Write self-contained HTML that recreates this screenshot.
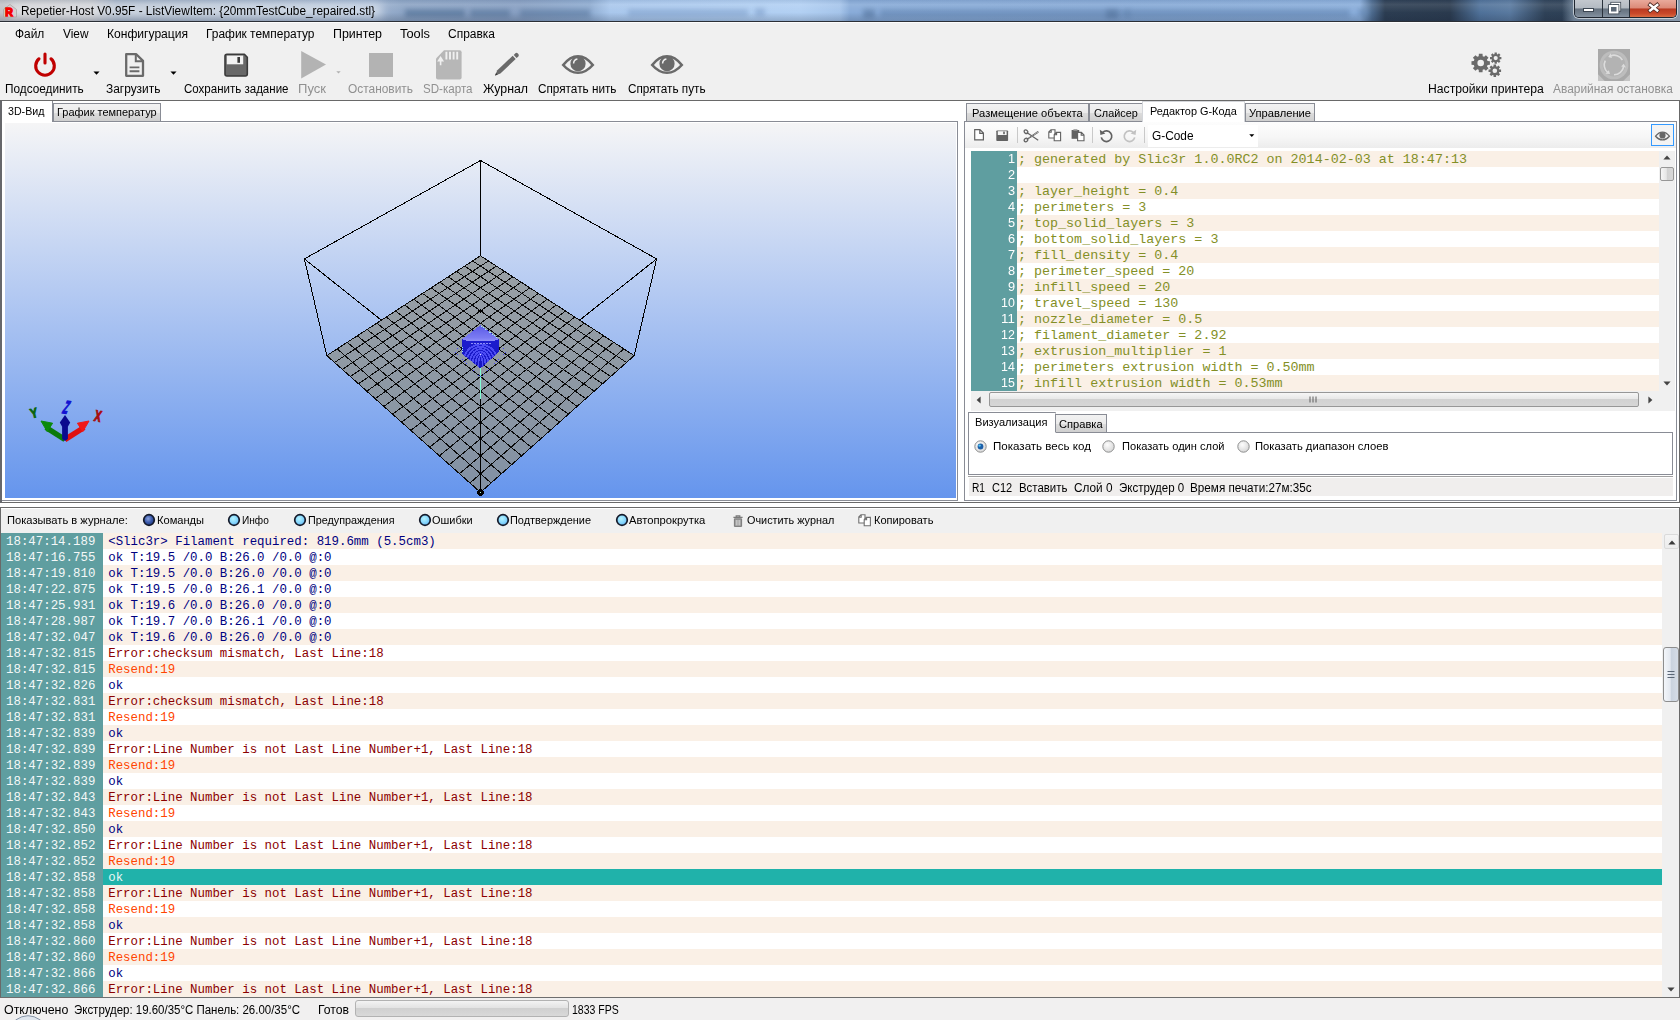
<!DOCTYPE html>
<html lang="ru"><head><meta charset="utf-8">
<title>Repetier-Host V0.95F</title>
<style>
html,body{margin:0;padding:0;}
body{width:1680px;height:1020px;overflow:hidden;background:#f0f0f0;}
#app{position:relative;width:1680px;height:1020px;overflow:hidden;background:#f0f0f0;font-family:"Liberation Sans",sans-serif;}
.a{position:absolute;}
.t{position:absolute;white-space:pre;line-height:1;transform-origin:0 0;display:inline-block;}
.s{font-family:"Liberation Sans",sans-serif;}
.m{font-family:"Liberation Mono",monospace;}
svg{position:absolute;overflow:visible;}
.tab{position:absolute;box-sizing:border-box;border:1px solid #898c95;border-bottom:none;background:linear-gradient(#f2f2f2,#ebebeb 50%,#dddddd 50%,#cfcfcf);}
.tabon{position:absolute;box-sizing:border-box;border:1px solid #898c95;border-bottom:none;background:#fff;}
.row{position:absolute;height:16px;}
.lin{background:#faf0e6;}

</style></head>
<body>
<div id="app">
<!-- title bar -->
<div class="a" id="titlebar" style="left:0;top:0;width:1680px;height:21px;overflow:hidden;background:linear-gradient(90deg,#c2c3c7 0px,#bec1c8 92px,#a0afc4 116px,#a3b5cd 300px,#9fb4d1 372px,#8da5c5 402px,#879fc2 520px,#8eabd0 590px,#a9c7ec 610px,#b2d0f3 800px,#a5c4ea 840px,#88abd8 850px,#86a9d6 1100px,#8aaedb 1360px,#4c6a8e 1372px,#2c3d52 1385px,#2a3a4e 1450px,#4f7199 1480px,#59799f 1510px,#2f4258 1545px,#2a3a4e 1680px);">
<div class="a" style="left:405px;top:9px;width:60px;height:8px;background:#4c6b92;opacity:0.60;filter:blur(2.5px);"></div>
<div class="a" style="left:470px;top:9px;width:40px;height:8px;background:#4c6b92;opacity:0.52;filter:blur(2.5px);"></div>
<div class="a" style="left:520px;top:9px;width:70px;height:8px;background:#4c6b92;opacity:0.45;filter:blur(2.5px);"></div>
<div class="a" style="left:628px;top:9px;width:120px;height:7px;background:#7f9fca;opacity:0.60;filter:blur(2.5px);"></div>
<div class="a" style="left:755px;top:8px;width:10px;height:8px;background:#7f9fca;opacity:0.60;filter:blur(2.5px);"></div>
<div class="a" style="left:863px;top:9px;width:12px;height:9px;background:#55759e;opacity:0.60;filter:blur(2.5px);"></div>
<div class="a" style="left:880px;top:9px;width:250px;height:8px;background:#5f80ab;opacity:0.52;filter:blur(2.5px);"></div>
<div class="a" style="left:1106px;top:9px;width:12px;height:9px;background:#55759e;opacity:0.60;filter:blur(2.5px);"></div>
<div class="a" style="left:1125px;top:9px;width:225px;height:8px;background:#5f80ab;opacity:0.52;filter:blur(2.5px);"></div>
<div class="a" style="left:1358px;top:8px;width:8px;height:8px;background:#5f80ab;opacity:0.52;filter:blur(2.5px);"></div>
<div class="a" style="left:0;top:0;width:1680px;height:21px;background:linear-gradient(rgba(60,80,110,.10),rgba(255,255,255,.10) 22%,rgba(255,255,255,0) 60%,rgba(20,30,50,.20) 100%);"></div>
<div class="a" style="left:10px;top:4px;width:372px;height:13px;background:rgba(255,255,255,.5);filter:blur(5px);"></div>
<svg style="left:2px;top:3px" width="16" height="16" viewBox="0 0 16 16"><path d="M1.5 6.5 L8 1.5 L14.5 6.5 V14 H1.5Z" fill="#d4d0ce" stroke="#aaa4a2" stroke-width=".8"/><text x="3.2" y="13.2" font-family="Liberation Sans, sans-serif" font-weight="bold" font-size="10.5" fill="#f40000" stroke="#f40000" stroke-width="1.3">R</text></svg>
<span id="t1" class="t s" style="left:21.30px;top:4.64px;font-size:12.00px;color:#000;transform:scaleX(0.9853);">Repetier-Host V0.95F - ListViewItem: {20mmTestCube_repaired.stl}</span>
<div class="a" style="left:1562px;top:0;width:118px;height:21px;background:linear-gradient(90deg,rgba(160,180,200,0),rgba(160,180,200,.55) 12px,rgba(170,186,204,.75) 100%);"></div>
<div class="a" style="left:1574px;top:0;width:103px;height:18px;border:1px solid #1f2630;border-top:none;border-radius:0 0 5px 5px;box-sizing:border-box;overflow:hidden;box-shadow:0 0 0 1px rgba(255,255,255,.55);"><div class="a" style="left:0;top:0;width:27px;height:18px;background:linear-gradient(#c3c8ce,#b3bac2 44%,#66727f 50%,#74818f 75%,#8a97a6);border-right:1px solid #2a323c;"></div><div class="a" style="left:28px;top:0;width:26px;height:18px;background:linear-gradient(#c3c8ce,#b3bac2 44%,#66727f 50%,#74818f 75%,#8a97a6);border-right:1px solid #2a323c;"></div><div class="a" style="left:55px;top:0;width:48px;height:18px;background:linear-gradient(#e9aa9c,#dc8a78 44%,#b93a22 50%,#c9482a 75%,#de7448);"></div></div>
<svg style="left:1574px;top:0" width="103" height="18" viewBox="0 0 103 18"><rect x="9.5" y="8.5" width="10" height="3" fill="#fff" stroke="#3c4652" stroke-width="1"/><rect x="38" y="3.5" width="7.5" height="6.5" fill="none" stroke="#3c4652" stroke-width="3.2"/><rect x="38" y="3.5" width="7.5" height="6.5" fill="none" stroke="#fff" stroke-width="1.6"/><rect x="36" y="6" width="7.5" height="6.5" fill="#5d6977" stroke="#3c4652" stroke-width="3.6"/><rect x="36" y="6" width="7.5" height="6.5" fill="#5d6977" stroke="#fff" stroke-width="2"/><path d="M76.2 4.9 L83.2 10.5 M83.2 4.9 L76.2 10.5" stroke="#4a2620" stroke-width="4" stroke-linecap="square"/><path d="M76.2 4.9 L83.2 10.5 M83.2 4.9 L76.2 10.5" stroke="#fff" stroke-width="2.5" stroke-linecap="square"/></svg>
</div>
<div class="a" style="left:0;top:21px;width:1680px;height:1px;background:#2b2f36;"></div>
<div class="a" style="left:0;top:22px;width:1680px;height:1px;background:#fdfdfd;"></div>
<!-- menu bar -->
<span id="t2" class="t s" style="left:14.80px;top:28.34px;font-size:12.00px;color:#000;transform:scaleX(0.9927);">Файл</span>
<span id="t3" class="t s" style="left:62.80px;top:28.34px;font-size:12.00px;color:#000;transform:scaleX(0.9885);">View</span>
<span id="t4" class="t s" style="left:106.90px;top:28.34px;font-size:12.00px;color:#000;transform:scaleX(1.0058);">Конфигурация</span>
<span id="t5" class="t s" style="left:206.30px;top:28.34px;font-size:12.00px;color:#000;transform:scaleX(0.9950);">График температур</span>
<span id="t6" class="t s" style="left:333.30px;top:28.34px;font-size:12.00px;color:#000;transform:scaleX(1.0350);">Принтер</span>
<span id="t7" class="t s" style="left:400.30px;top:28.34px;font-size:12.00px;color:#000;transform:scaleX(1.0708);">Tools</span>
<span id="t8" class="t s" style="left:448.30px;top:28.34px;font-size:12.00px;color:#000;transform:scaleX(0.9983);">Справка</span>
<!-- toolbar -->
<span id="t9" class="t s" style="left:5.20px;top:83.34px;font-size:12.00px;color:#000;transform:scaleX(0.9832);">Подсоединить</span>
<span id="t10" class="t s" style="left:106.40px;top:83.34px;font-size:12.00px;color:#000;transform:scaleX(0.9928);">Загрузить</span>
<span id="t11" class="t s" style="left:183.80px;top:83.34px;font-size:12.00px;color:#000;transform:scaleX(0.9602);">Сохранить задание</span>
<span id="t12" class="t s" style="left:298.30px;top:83.34px;font-size:12.00px;color:#909090;transform:scaleX(1.0874);">Пуск</span>
<span id="t13" class="t s" style="left:348.30px;top:83.34px;font-size:12.00px;color:#909090;transform:scaleX(0.9924);">Остановить</span>
<span id="t14" class="t s" style="left:423.30px;top:83.34px;font-size:12.00px;color:#909090;transform:scaleX(0.9647);">SD-карта</span>
<span id="t15" class="t s" style="left:482.80px;top:83.34px;font-size:12.00px;color:#000;transform:scaleX(1.0275);">Журнал</span>
<span id="t16" class="t s" style="left:538.30px;top:83.34px;font-size:12.00px;color:#000;transform:scaleX(0.9795);">Спрятать нить</span>
<span id="t17" class="t s" style="left:627.80px;top:83.34px;font-size:12.00px;color:#000;transform:scaleX(0.9771);">Спрятать путь</span>
<span id="t18" class="t s" style="left:1427.50px;top:83.34px;font-size:12.00px;color:#000;transform:scaleX(1.0144);">Настройки принтера</span>
<span id="t19" class="t s" style="left:1553.30px;top:83.34px;font-size:12.00px;color:#909090;transform:scaleX(0.9933);">Аварийная остановка</span>
<svg style="left:30px;top:50px" width="30" height="30" viewBox="0 0 30 30"><path d="M9 8.8 A9.3 9.3 0 1 0 21 8.8" fill="none" stroke="#c00000" stroke-width="3.1" stroke-linecap="round"/><path d="M15 4 V13" stroke="#c00000" stroke-width="3.1" stroke-linecap="round"/></svg>
<svg style="left:93.0px;top:70.5px" width="7" height="4.4" viewBox="0 0 8 5"><path d="M.5 .5 H7.5 L4 4.2Z" fill="#000"/></svg>
<svg style="left:170.0px;top:70.5px" width="7" height="4.4" viewBox="0 0 8 5"><path d="M.5 .5 H7.5 L4 4.2Z" fill="#000"/></svg>
<svg style="left:336.1px;top:70.6px" width="5" height="3.1" viewBox="0 0 8 5"><path d="M.5 .5 H7.5 L4 4.2Z" fill="#b0b0b0"/></svg>
<svg style="left:124px;top:53px" width="22" height="24" viewBox="0 0 22 24"><path d="M2.2 1.2 H12.3 L19 7.9 V22.8 H2.2Z" fill="none" stroke="#6a6a6a" stroke-width="2.3" stroke-linejoin="round"/><path d="M11.8 1.5 V8.3 H18.8" fill="none" stroke="#6a6a6a" stroke-width="2"/><path d="M5.6 14.4 H15.4 M5.6 18.2 H15.4" stroke="#6a6a6a" stroke-width="1.9"/></svg>
<svg style="left:224px;top:53px" width="25" height="24" viewBox="0 0 25 24"><path d="M3 1.3 H20.4 L23.3 4.2 V21 Q23.3 23 21.3 23 H3 Q1 23 1 21 V3.3 Q1 1.3 3 1.3Z" fill="#686868" stroke="#3a3a3a" stroke-width="1.6" stroke-linejoin="round"/><rect x="2.8" y="2.6" width="16.4" height="8.7" fill="#f2f2f2"/><rect x="13.4" y="4" width="2.6" height="5.8" fill="#3a3a3a"/></svg>
<svg style="left:300px;top:50px" width="28" height="30" viewBox="0 0 28 30"><path d="M1.2 1 L26 14.6 L1.2 28.6Z" fill="#b3b3b3"/></svg>
<div class="a" style="left:369px;top:53px;width:24px;height:24px;background:#b3b3b3;"></div>
<svg style="left:435px;top:50px" width="28" height="30" viewBox="0 0 28 30"><path d="M9 .3 H24.6 Q26.6 .3 26.6 2.3 V27.4 Q26.6 29.4 24.6 29.4 H3 Q1 29.4 1 27.4 V8.5Z" fill="#b7b7b7"/><path d="M11.4 1.8 V9.6 M15 1.8 V9.6 M18.6 1.8 V9.6 M22.2 1.8 V9.6" stroke="#f0f0f0" stroke-width="1.9"/><path d="M5.6 15.2 V10 M3.6 10.6 L5.6 7.4 L7.6 10.6Z" stroke="#f0f0f0" stroke-width="1.6" fill="#f0f0f0"/></svg>
<svg style="left:493px;top:51px" width="27" height="26" viewBox="0 0 27 26"><path d="M2 24.6 L4.3 19.2 L19.7 4.8 L22.7 8 L7.4 22.5Z" fill="#6a6a6a"/><path d="M20.7 3.9 L22.4 2.3 Q23.6 1.2 24.8 2.4 L25.4 3.1 Q26.4 4.3 25.3 5.4 L23.6 7Z" fill="#6a6a6a"/><path d="M2 24.6 L3.1 22 L4.8 23.7Z" fill="#3c3c3c"/></svg>
<svg style="left:562.2px;top:55.3px" width="32.0" height="19.0" viewBox="0 0 32 19"><path d="M1.2 10 Q8 1.2 16 1.2 Q24 1.2 30.8 10 Q24 17.8 16 17.8 Q8 17.8 1.2 10Z" fill="none" stroke="#6a6a6a" stroke-width="2.6"/><circle cx="16" cy="8.7" r="7.6" fill="#6a6a6a"/><path d="M11.6 8.4 A4.6 4.6 0 0 1 15.4 4" stroke="#f0f0f0" stroke-width="1.5" fill="none"/></svg>
<svg style="left:650.8px;top:55.3px" width="32.0" height="19.0" viewBox="0 0 32 19"><path d="M1.2 10 Q8 1.2 16 1.2 Q24 1.2 30.8 10 Q24 17.8 16 17.8 Q8 17.8 1.2 10Z" fill="none" stroke="#6a6a6a" stroke-width="2.6"/><circle cx="16" cy="8.7" r="7.6" fill="#6a6a6a"/><path d="M11.6 8.4 A4.6 4.6 0 0 1 15.4 4" stroke="#f0f0f0" stroke-width="1.5" fill="none"/></svg>
<svg style="left:1470px;top:51px" width="34" height="28" viewBox="0 0 34 28"><path fill-rule="evenodd" fill="#6a6a6a" d="M19.92 10.17 L19.92 13.83 L17.56 13.99 L16.96 15.44 L18.52 17.22 L15.92 19.82 L14.14 18.26 L12.69 18.86 L12.53 21.22 L8.87 21.22 L8.71 18.86 L7.26 18.26 L5.48 19.82 L2.88 17.22 L4.44 15.44 L3.84 13.99 L1.48 13.83 L1.48 10.17 L3.84 10.01 L4.44 8.56 L2.88 6.78 L5.48 4.18 L7.26 5.74 L8.71 5.14 L8.87 2.78 L12.53 2.78 L12.69 5.14 L14.14 5.74 L15.92 4.18 L18.52 6.78 L16.96 8.56 L17.56 10.01Z M7.41 12.00 a3.29 3.29 0 1 0 6.58 0 a3.29 3.29 0 1 0 -6.58 0Z M31.39 5.97 L31.39 8.23 L29.77 8.28 L29.41 9.14 L30.52 10.32 L28.92 11.92 L27.74 10.81 L26.88 11.17 L26.83 12.79 L24.57 12.79 L24.52 11.17 L23.66 10.81 L22.48 11.92 L20.88 10.32 L21.99 9.14 L21.63 8.28 L20.01 8.23 L20.01 5.97 L21.63 5.92 L21.99 5.06 L20.88 3.88 L22.48 2.28 L23.66 3.39 L24.52 3.03 L24.57 1.41 L26.83 1.41 L26.88 3.03 L27.74 3.39 L28.92 2.28 L30.52 3.88 L29.41 5.06 L29.77 5.92Z M23.61 7.10 a2.09 2.09 0 1 0 4.18 0 a2.09 2.09 0 1 0 -4.18 0Z M31.08 18.55 L31.08 21.05 L29.29 21.10 L28.89 22.05 L30.12 23.36 L28.36 25.12 L27.05 23.89 L26.10 24.29 L26.05 26.08 L23.55 26.08 L23.50 24.29 L22.55 23.89 L21.24 25.12 L19.48 23.36 L20.71 22.05 L20.31 21.10 L18.52 21.05 L18.52 18.55 L20.31 18.50 L20.71 17.55 L19.48 16.24 L21.24 14.48 L22.55 15.71 L23.50 15.31 L23.55 13.52 L26.05 13.52 L26.10 15.31 L27.05 15.71 L28.36 14.48 L30.12 16.24 L28.89 17.55 L29.29 18.50Z M22.50 19.80 a2.30 2.30 0 1 0 4.61 0 a2.30 2.30 0 1 0 -4.61 0Z"/></svg>
<svg style="left:1598px;top:48.9px" width="32" height="32" viewBox="0 0 33 33"><rect x="0" y="0" width="33" height="33" fill="#a9a9a9"/><path d="M0 26 L7 33 H0Z M33 26 L26 33 H33Z" fill="#c4c4c4"/><circle cx="16.5" cy="16.5" r="14.8" fill="#bdbdbd"/><circle cx="16.5" cy="16.5" r="11.8" fill="#b3b3b3"/><path d="M25.16 11.30 A10.1 10.1 0 0 0 13.05 7.01" fill="none" stroke="#dcdcdc" stroke-width="1.7"/><path d="M10.56 8.33 L13.03 4.39 L14.41 9.19Z" fill="#dcdcdc"/><path d="M7.50 11.91 A10.1 10.1 0 0 0 10.01 24.24" fill="none" stroke="#dcdcdc" stroke-width="1.7"/><path d="M12.39 25.73 L7.75 25.56 L11.22 21.97Z" fill="#dcdcdc"/><path d="M16.50 26.60 A10.1 10.1 0 0 0 26.50 17.91" fill="none" stroke="#dcdcdc" stroke-width="1.7"/><path d="M26.50 15.09 L28.82 19.12 L23.93 18.08Z" fill="#dcdcdc"/></svg>
<!-- upper split panel -->
<div class="a" style="left:0;top:100px;width:1680px;height:403px;background:#fff;box-sizing:border-box;border-top:1px solid #696969;border-bottom:1px solid #696969;border-left:2px solid #66676b;border-right:1px solid #696969;"></div>
<div class="a" style="left:0;top:503px;width:1680px;height:4px;background:#fff;"></div>
<!-- left tab control (3D view) -->
<div class="a" style="left:2px;top:121px;width:956px;height:380px;box-sizing:border-box;border:1px solid #898c95;border-left:none;background:#fff;"></div>
<div class="tabon" style="left:2px;top:101px;width:51px;height:21px;border-left:none;border-top:none;"></div>
<div class="tab" style="left:53px;top:103px;width:108px;height:18px;"></div>
<span id="t20" class="t s" style="left:8.40px;top:105.89px;font-size:11.00px;color:#000;transform:scaleX(0.9674);">3D-Вид</span>
<span id="t21" class="t s" style="left:56.60px;top:107.09px;font-size:11.00px;color:#000;transform:scaleX(0.9973);">График температур</span>
<svg id="view3d" style="left:5px;top:123px" width="951" height="375" viewBox="5 123 951 375" shape-rendering="crispEdges">
<defs><linearGradient id="bg3d" x1="0" y1="0" x2="0" y2="1"><stop offset="0" stop-color="#f5f5f6"/><stop offset="1" stop-color="#6595ed"/></linearGradient><linearGradient id="cubeside" x1="0" y1="0" x2="0" y2="1"><stop offset="0" stop-color="#2020d4"/><stop offset="1" stop-color="#1616c2"/></linearGradient><linearGradient id="cubetop" x1="0" y1="0" x2="0" y2="1"><stop offset="0" stop-color="#5a5ae6"/><stop offset=".8" stop-color="#7a7af2"/><stop offset="1" stop-color="#8c8cf8"/></linearGradient></defs>
<rect x="5" y="123" width="951" height="375" fill="url(#bg3d)"/>
<g>
<path d="M480.5 160.5 L304.4 258.9" stroke="#000" stroke-width="1" fill="none"/>
<path d="M480.5 160.5 L656.6 258.9" stroke="#000" stroke-width="1" fill="none"/>
<path d="M304.4 258.9 L381.4 320.2" stroke="#000" stroke-width="1" fill="none"/>
<path d="M656.6 258.9 L579.6 320.2" stroke="#000" stroke-width="1" fill="none"/>
<path d="M480.5 160.5 L480.5 255.8" stroke="#000" stroke-width="1" fill="none"/>
<path d="M304.4 258.9 L326.8 355.6" stroke="#000" stroke-width="1" fill="none"/>
<path d="M656.6 258.9 L634.2 355.6" stroke="#000" stroke-width="1" fill="none"/>
</g>
<path d="M480.5 255.8 L634.2 355.6 L480.5 492.4 L326.8 355.6Z" fill="rgba(140,143,138,0.74)"/>
<path d="M480.5 255.8 L326.8 355.6 M480.5 255.8 L634.2 355.6 M488.4 260.9 L334.5 362.5 M472.6 260.9 L626.5 362.5 M496.4 266.1 L342.3 369.4 M464.6 266.1 L618.7 369.4 M504.5 271.4 L350.3 376.5 M456.5 271.4 L610.7 376.5 M512.8 276.8 L358.5 383.8 M448.2 276.8 L602.5 383.8 M521.2 282.2 L366.8 391.2 M439.8 282.2 L594.2 391.2 M529.8 287.8 L375.2 398.7 M431.2 287.8 L585.8 398.7 M538.5 293.4 L383.9 406.4 M422.5 293.4 L577.1 406.4 M547.3 299.2 L392.7 414.2 M413.7 299.2 L568.3 414.2 M556.3 305.0 L401.6 422.2 M404.7 305.0 L559.4 422.2 M565.4 311.0 L410.8 430.4 M395.6 311.0 L550.2 430.4 M574.8 317.0 L420.1 438.7 M386.2 317.0 L540.9 438.7 M584.2 323.1 L429.7 447.2 M376.8 323.1 L531.3 447.2 M593.9 329.4 L439.4 455.8 M367.1 329.4 L521.6 455.8 M603.7 335.8 L449.4 464.7 M357.3 335.8 L511.6 464.7 M613.7 342.3 L459.5 473.7 M347.3 342.3 L501.5 473.7 M623.8 348.9 L469.9 483.0 M337.2 348.9 L491.1 483.0 M634.2 355.6 L480.5 492.4 M326.8 355.6 L480.5 492.4" stroke="#0a0a0a" stroke-width="1" fill="none"/>
<path d="M478 311 H483 M480.5 309 V313" stroke="#000" stroke-width="1.6"/>
<path d="M480.5 399 V492" stroke="#000" stroke-width="1.3"/>
<path d="M480.5 368 V399" stroke="#7fffd4" stroke-width="1.3"/>
<path d="M480.5 330 L507 351 L480.5 377 L454 351Z" stroke="#4040ff" stroke-width=".9" stroke-dasharray="1 2.2" fill="none"/>
<clipPath id="cubeclip"><path d="M462.3 340 H498.8 V352 L480.5 368.4 L462.3 354Z"/></clipPath>
<path d="M462.3 339 L480.5 325.2 L498.8 339 L498.8 352 L480.5 368.4 L462.3 354Z" fill="url(#cubeside)"/>
<path d="M462.3 339.2 L480.5 325.2 L498.8 339.2 L494.6 340.6 H466.4Z" fill="url(#cubetop)"/>
<path d="M478.1 374 C478.1 362.0 479.2 356.6 480.5 356.0 C481.8 356.6 482.9 362.0 482.9 374 M474.9 374 C474.9 359.7 477.4 354.3 480.5 353.7 C483.6 354.3 486.1 359.7 486.1 374 M471.7 374 C471.7 357.4 475.7 352.0 480.5 351.4 C485.3 352.0 489.3 357.4 489.3 374 M468.5 374 C468.5 355.1 473.9 349.7 480.5 349.1 C487.1 349.7 492.5 355.1 492.5 374 M465.3 374 C465.3 352.8 472.1 347.4 480.5 346.8 C488.9 347.4 495.7 352.8 495.7 374 M462.1 374 C462.1 350.5 470.4 345.1 480.5 344.5 C490.6 345.1 498.9 350.5 498.9 374" stroke="#4c4cf4" stroke-width="1.7" fill="none" clip-path="url(#cubeclip)"/>
<path d="M470.6 343.2 H491" stroke="#8e8ef6" stroke-width="1.3" stroke-dasharray="2 1"/>
<rect x="480" y="354" width="1" height="1" fill="#d8d8ff"/>
<path d="M481 325.8 L498 338.6" stroke="#9ceaff" stroke-width="1" stroke-dasharray="1 1.7" fill="none"/>
<path d="M462.5 346.6 V354" stroke="#9ceaff" stroke-width="1" stroke-dasharray="1 1.4" fill="none"/>
<circle cx="480.5" cy="492.4" r="3.4" fill="#000"/><rect x="480" y="492" width="1" height="1" fill="#b8ffd0"/>
<g shape-rendering="auto">
<path d="M64.9 439.6 L46 427.5" stroke="#0a7a0a" stroke-width="5.4"/><path d="M41 421 L52.6 423.2 L47.2 431.6Z" fill="#0b8a0b" stroke="#0b8a0b" stroke-width="1"/>
<path d="M64.9 439.6 L84 427.5" stroke="#e01010" stroke-width="5.4"/><path d="M89 421 L77.4 423.2 L82.8 431.6Z" fill="#f01818" stroke="#f01818" stroke-width="1"/>
<path d="M62.1 425 H67.9 V439 L65 441 L62.1 439Z" fill="#0a0a8e"/><path d="M65 415 L70.2 422.6 L68 426.4 H62 L59.8 422.6Z" fill="#0a0a8e"/>
<text x="0" y="0" transform="translate(31.6 418.6) rotate(-14) scale(.85 1.05)" font-family="Liberation Sans, sans-serif" font-weight="bold" font-size="13" fill="#0a640a" stroke="#0a640a" stroke-width=".9">Y</text>
<text x="0" y="0" transform="translate(61.4 413) rotate(8) skewX(-14) scale(.6 1.32)" font-family="Liberation Sans, sans-serif" font-weight="bold" font-size="14" fill="#1212d2" stroke="#1212d2" stroke-width="1">Z</text>
<text x="0" y="0" transform="translate(93.6 420.6) rotate(13) scale(.72 1.12)" font-family="Liberation Sans, sans-serif" font-weight="bold" font-size="14" fill="#a80c0c" stroke="#a80c0c" stroke-width=".9">X</text>
</g>
</svg>
<!-- right tab control (G-code editor) -->
<div class="a" style="left:964px;top:121px;width:713px;height:380px;box-sizing:border-box;border:1px solid #898c95;background:#fff;"></div>
<div class="tab" style="left:966px;top:103px;width:123px;height:18px;"></div>
<div class="tab" style="left:1089px;top:103px;width:54px;height:18px;"></div>
<div class="tabon" style="left:1142px;top:101px;width:103px;height:21px;border-color:#d4d6da;"></div>
<div class="tab" style="left:1245px;top:103px;width:70px;height:18px;"></div>
<span id="t22" class="t s" style="left:971.70px;top:107.69px;font-size:11.00px;color:#000;transform:scaleX(1.0134);">Размещение объекта</span>
<span id="t23" class="t s" style="left:1093.90px;top:107.69px;font-size:11.00px;color:#000;transform:scaleX(0.9870);">Слайсер</span>
<span id="t24" class="t s" style="left:1149.60px;top:105.89px;font-size:11.00px;color:#000;transform:scaleX(0.9914);">Редактор G-Кода</span>
<span id="t25" class="t s" style="left:1248.60px;top:107.69px;font-size:11.00px;color:#000;transform:scaleX(1.0138);">Управление</span>
<div class="a" style="left:965px;top:122px;width:711px;height:26px;background:linear-gradient(#fdfdfd,#f7f7f7 55%,#ececec);"></div>
<svg style="left:974px;top:129.4px" width="11" height="12" viewBox="0 0 11 12"><path d="M.7 .7 H6 L9.4 4.1 V10.9 H.7Z M5.8 .9 V4.3 H9.2" fill="#fff" stroke="#626262" stroke-width="1.2"/></svg>
<svg style="left:995.6px;top:129.6px" width="13" height="12" viewBox="0 0 13 12"><rect x=".3" y=".4" width="11.8" height="10.6" rx=".8" fill="#626262"/><rect x="1.8" y="1.2" width="8.8" height="3.8" fill="#f6f6f6"/><rect x="7.2" y="1.6" width="1.6" height="2.6" fill="#626262"/></svg>
<div class="a" style="left:1017px;top:127px;width:1px;height:16px;background:#c9c9c9;"></div>
<svg style="left:1023.4px;top:128.6px" width="17" height="14" viewBox="0 0 17 14"><path d="M3.8 3.6 L15.2 11.2" stroke="#626262" stroke-width="1.2" fill="none"/><path d="M3.8 10.2 L14.8 2.4 L15.4 3.4 L6 9.4Z" stroke="#626262" stroke-width=".9" fill="#fff"/><ellipse cx="3" cy="2.7" rx="2" ry="1.6" fill="none" stroke="#626262" stroke-width="1.3" transform="rotate(40 3 2.7)"/><ellipse cx="3" cy="11" rx="2" ry="1.6" fill="none" stroke="#626262" stroke-width="1.3" transform="rotate(-40 3 11)"/></svg>
<svg style="left:1047.6px;top:128.8px" width="14" height="13" viewBox="0 0 14 13"><path d="M.8 3 L3 .7 H7 V9 H.8Z M3.2 .9 V3.2 H1" fill="#fff" stroke="#626262" stroke-width="1.1"/><path d="M6.2 5.6 L8.4 3.4 H12.6 V11.8 H6.2Z M8.6 3.6 V5.8 H6.4" fill="#fff" stroke="#626262" stroke-width="1.1"/></svg>
<svg style="left:1070.6px;top:128.8px" width="15" height="13" viewBox="0 0 15 13"><rect x=".6" y="1" width="7.6" height="8.8" fill="#626262"/><rect x="2.4" y=".2" width="4" height="1.6" fill="#9a9a9a"/><path d="M6.6 3.4 H10.4 L13 6 V11.8 H6.6Z M10.2 3.6 V6.2 H12.8" fill="#fff" stroke="#626262" stroke-width="1.1"/></svg>
<div class="a" style="left:1092px;top:127px;width:1px;height:16px;background:#c9c9c9;"></div>
<svg style="left:1099px;top:127.6px" width="15" height="15" viewBox="0 0 15 15"><path d="M3.6 4.6 A5.3 5.3 0 1 1 2.3 9.4" fill="none" stroke="#626262" stroke-width="1.7"/><path d="M.8 1.8 L1.4 7 L6.4 5.4Z" fill="#626262"/></svg>
<svg style="left:1121.6px;top:127.6px" width="15" height="15" viewBox="0 0 15 15"><path d="M11.4 4.6 A5.3 5.3 0 1 0 12.7 9.4" fill="none" stroke="#c2c2c2" stroke-width="1.7"/><path d="M14.2 1.8 L13.6 7 L8.6 5.4Z" fill="#c2c2c2"/></svg>
<div class="a" style="left:1144px;top:127px;width:1px;height:16px;background:#c9c9c9;"></div>
<div class="a" style="left:1148px;top:125px;width:110px;height:22px;background:#fff;"></div>
<span id="t26" class="t s" style="left:1151.70px;top:129.84px;font-size:12.00px;color:#000;transform:scaleX(0.9897);">G-Code</span>
<svg style="left:1248.6px;top:134px" width="5.6" height="3.5" viewBox="0 0 8 5"><path d="M.4 .4 H7.6 L4 4.4Z" fill="#000"/></svg>
<div class="a" style="left:1651px;top:124px;width:23px;height:22px;box-sizing:border-box;border:1px solid #3399ff;background:#f3f3f3;"></div>
<svg style="left:1655px;top:130.5px" width="15" height="10" viewBox="0 0 32 19"><path d="M1.2 10 Q8 1.2 16 1.2 Q24 1.2 30.8 10 Q24 17.8 16 17.8 Q8 17.8 1.2 10Z" fill="none" stroke="#666" stroke-width="2.6"/><circle cx="16" cy="8.3" r="6.6" fill="#666"/></svg>
<div class="a" style="left:971px;top:151px;width:46px;height:240px;background:#5f9ea0;"></div>
<div class="row lin" style="left:1017px;top:151px;width:642px;"></div>
<span id="t27" class="t s" style="left:1007.80px;top:153.44px;font-size:12.00px;color:#fff;transform:scaleX(1.0617);">1</span>
<span id="t28" class="t m" style="left:1018.00px;top:152.56px;font-size:13.36px;color:#838f26;">; generated by Slic3r 1.0.0RC2 on 2014-02-03 at 18:47:13</span>
<div class="row" style="left:1017px;top:167px;width:642px;"></div>
<span id="t29" class="t s" style="left:1007.80px;top:169.44px;font-size:12.00px;color:#fff;transform:scaleX(1.0617);">2</span>
<div class="row lin" style="left:1017px;top:183px;width:642px;"></div>
<span id="t30" class="t s" style="left:1007.80px;top:185.44px;font-size:12.00px;color:#fff;transform:scaleX(1.0617);">3</span>
<span id="t31" class="t m" style="left:1018.00px;top:184.56px;font-size:13.36px;color:#838f26;">; layer_height = 0.4</span>
<div class="row" style="left:1017px;top:199px;width:642px;"></div>
<span id="t32" class="t s" style="left:1007.80px;top:201.44px;font-size:12.00px;color:#fff;transform:scaleX(1.0617);">4</span>
<span id="t33" class="t m" style="left:1018.00px;top:200.56px;font-size:13.36px;color:#838f26;">; perimeters = 3</span>
<div class="row lin" style="left:1017px;top:215px;width:642px;"></div>
<span id="t34" class="t s" style="left:1007.80px;top:217.44px;font-size:12.00px;color:#fff;transform:scaleX(1.0617);">5</span>
<span id="t35" class="t m" style="left:1018.00px;top:216.56px;font-size:13.36px;color:#838f26;">; top_solid_layers = 3</span>
<div class="row" style="left:1017px;top:231px;width:642px;"></div>
<span id="t36" class="t s" style="left:1007.80px;top:233.44px;font-size:12.00px;color:#fff;transform:scaleX(1.0617);">6</span>
<span id="t37" class="t m" style="left:1018.00px;top:232.56px;font-size:13.36px;color:#838f26;">; bottom_solid_layers = 3</span>
<div class="row lin" style="left:1017px;top:247px;width:642px;"></div>
<span id="t38" class="t s" style="left:1007.80px;top:249.44px;font-size:12.00px;color:#fff;transform:scaleX(1.0617);">7</span>
<span id="t39" class="t m" style="left:1018.00px;top:248.56px;font-size:13.36px;color:#838f26;">; fill_density = 0.4</span>
<div class="row" style="left:1017px;top:263px;width:642px;"></div>
<span id="t40" class="t s" style="left:1007.80px;top:265.44px;font-size:12.00px;color:#fff;transform:scaleX(1.0617);">8</span>
<span id="t41" class="t m" style="left:1018.00px;top:264.56px;font-size:13.36px;color:#838f26;">; perimeter_speed = 20</span>
<div class="row lin" style="left:1017px;top:279px;width:642px;"></div>
<span id="t42" class="t s" style="left:1007.80px;top:281.44px;font-size:12.00px;color:#fff;transform:scaleX(1.0617);">9</span>
<span id="t43" class="t m" style="left:1018.00px;top:280.56px;font-size:13.36px;color:#838f26;">; infill_speed = 20</span>
<div class="row" style="left:1017px;top:295px;width:642px;"></div>
<span id="t44" class="t s" style="left:1001.10px;top:297.44px;font-size:12.00px;color:#fff;transform:scaleX(1.0330);">10</span>
<span id="t45" class="t m" style="left:1018.00px;top:296.56px;font-size:13.36px;color:#838f26;">; travel_speed = 130</span>
<div class="row lin" style="left:1017px;top:311px;width:642px;"></div>
<span id="t46" class="t s" style="left:1001.10px;top:313.44px;font-size:12.00px;color:#fff;transform:scaleX(1.1068);">11</span>
<span id="t47" class="t m" style="left:1018.00px;top:312.56px;font-size:13.36px;color:#838f26;">; nozzle_diameter = 0.5</span>
<div class="row" style="left:1017px;top:327px;width:642px;"></div>
<span id="t48" class="t s" style="left:1001.10px;top:329.44px;font-size:12.00px;color:#fff;transform:scaleX(1.0330);">12</span>
<span id="t49" class="t m" style="left:1018.00px;top:328.56px;font-size:13.36px;color:#838f26;">; filament_diameter = 2.92</span>
<div class="row lin" style="left:1017px;top:343px;width:642px;"></div>
<span id="t50" class="t s" style="left:1001.10px;top:345.44px;font-size:12.00px;color:#fff;transform:scaleX(1.0330);">13</span>
<span id="t51" class="t m" style="left:1018.00px;top:344.56px;font-size:13.36px;color:#838f26;">; extrusion_multiplier = 1</span>
<div class="row" style="left:1017px;top:359px;width:642px;"></div>
<span id="t52" class="t s" style="left:1001.10px;top:361.44px;font-size:12.00px;color:#fff;transform:scaleX(1.0330);">14</span>
<span id="t53" class="t m" style="left:1018.00px;top:360.56px;font-size:13.36px;color:#838f26;">; perimeters extrusion width = 0.50mm</span>
<div class="row lin" style="left:1017px;top:375px;width:642px;"></div>
<span id="t54" class="t s" style="left:1001.10px;top:377.44px;font-size:12.00px;color:#fff;transform:scaleX(1.0330);">15</span>
<span id="t55" class="t m" style="left:1018.00px;top:376.56px;font-size:13.36px;color:#838f26;">; infill extrusion width = 0.53mm</span>
<div class="a" style="left:1659px;top:151px;width:16px;height:240px;background:#f0f0f0;"></div>
<div class="a" style="left:1659.5px;top:166.5px;width:14px;height:14px;box-sizing:border-box;border:1px solid #979797;border-radius:2px;background:linear-gradient(90deg,#f6f6f6,#e6e6e6 45%,#d2d2d2 50%,#d8d8d8);"></div>
<svg style="left:1663px;top:155px" width="8" height="5" viewBox="0 0 8 5"><path d="M.4 4.6 H7.6 L4 .6Z" fill="#444"/></svg>
<svg style="left:1663px;top:380.5px" width="8" height="5" viewBox="0 0 8 5"><path d="M.4 .4 H7.6 L4 4.4Z" fill="#444"/></svg>
<div class="a" style="left:971px;top:391px;width:704px;height:20px;background:#f0f0f0;"></div>
<div class="a" style="left:988.5px;top:392px;width:650px;height:15px;box-sizing:border-box;border:1px solid #979797;border-radius:2px;background:linear-gradient(#f6f6f6,#e8e8e8 45%,#d2d2d2 50%,#d6d6d6);"></div>
<svg style="left:976px;top:395.5px" width="5" height="8" viewBox="0 0 5 8"><path d="M4.6 .4 V7.6 L.6 4Z" fill="#444"/></svg>
<svg style="left:1647.5px;top:395.5px" width="5" height="8" viewBox="0 0 5 8"><path d="M.4 .4 V7.6 L4.4 4Z" fill="#444"/></svg>
<svg style="left:1309px;top:396px" width="8" height="7" viewBox="0 0 8 7"><path d="M1 .5 V6.5 M4 .5 V6.5 M7 .5 V6.5" stroke="#5c5c5c" stroke-width="1"/></svg>
<div class="a" style="left:968px;top:432px;width:705px;height:43px;box-sizing:border-box;border:1px solid #898c95;background:#fff;"></div>
<div class="tabon" style="left:968px;top:412px;width:88px;height:21px;border-right-color:#c4c6ca;"></div>
<div class="tab" style="left:1055px;top:414px;width:52px;height:18px;"></div>
<span id="t56" class="t s" style="left:975.30px;top:417.09px;font-size:11.00px;color:#000;transform:scaleX(1.0065);">Визуализация</span>
<span id="t57" class="t s" style="left:1058.70px;top:418.69px;font-size:11.00px;color:#000;transform:scaleX(1.0103);">Справка</span>
<svg style="left:974.4px;top:439.8px" width="13" height="13" viewBox="0 0 13 13"><defs><radialGradient id="rg980" cx=".4" cy=".35" r=".8"><stop offset="0" stop-color="#fdfdfd"/><stop offset="1" stop-color="#cfcfcf"/></radialGradient></defs><circle cx="6.5" cy="6.5" r="5.7" fill="url(#rg980)" stroke="#8e8f8f" stroke-width="1"/><circle cx="6.5" cy="6.5" r="2.9" fill="#1c5fa8"/><circle cx="5.6" cy="5.6" r="1.2" fill="#55c3f2"/></svg>
<svg style="left:1102.1px;top:439.8px" width="13" height="13" viewBox="0 0 13 13"><defs><radialGradient id="rg1108" cx=".4" cy=".35" r=".8"><stop offset="0" stop-color="#fdfdfd"/><stop offset="1" stop-color="#cfcfcf"/></radialGradient></defs><circle cx="6.5" cy="6.5" r="5.7" fill="url(#rg1108)" stroke="#8e8f8f" stroke-width="1"/></svg>
<svg style="left:1236.5px;top:439.8px" width="13" height="13" viewBox="0 0 13 13"><defs><radialGradient id="rg1243" cx=".4" cy=".35" r=".8"><stop offset="0" stop-color="#fdfdfd"/><stop offset="1" stop-color="#cfcfcf"/></radialGradient></defs><circle cx="6.5" cy="6.5" r="5.7" fill="url(#rg1243)" stroke="#8e8f8f" stroke-width="1"/></svg>
<span id="t58" class="t s" style="left:993.20px;top:440.89px;font-size:11.00px;color:#000;transform:scaleX(1.0506);">Показать весь код</span>
<span id="t59" class="t s" style="left:1121.70px;top:440.89px;font-size:11.00px;color:#000;transform:scaleX(1.0078);">Показать один слой</span>
<span id="t60" class="t s" style="left:1255.10px;top:440.89px;font-size:11.00px;color:#000;transform:scaleX(1.0210);">Показать диапазон слоев</span>
<div class="a" style="left:968px;top:476px;width:705px;height:1px;background:#a0a0a0;"></div>
<div class="a" style="left:969px;top:478px;width:704px;height:18px;background:#f0eeed;"></div>
<span id="t61" class="t s" style="left:971.50px;top:481.64px;font-size:12.00px;color:#000;transform:scaleX(0.8473);">R1</span>
<span id="t62" class="t s" style="left:991.90px;top:481.64px;font-size:12.00px;color:#000;transform:scaleX(0.9175);">C12</span>
<span id="t63" class="t s" style="left:1018.50px;top:481.64px;font-size:12.00px;color:#000;transform:scaleX(0.9514);">Вставить</span>
<span id="t64" class="t s" style="left:1073.50px;top:481.64px;font-size:12.00px;color:#000;transform:scaleX(0.9825);">Слой 0</span>
<span id="t65" class="t s" style="left:1118.70px;top:481.64px;font-size:12.00px;color:#000;transform:scaleX(0.9586);">Экструдер 0</span>
<span id="t66" class="t s" style="left:1190.00px;top:481.64px;font-size:12.00px;color:#000;transform:scaleX(0.9760);">Время печати:27м:35с</span>
<!-- log panel -->
<div class="a" style="left:0;top:507px;width:1680px;height:491px;box-sizing:border-box;background:#f0f0f0;border-top:1px solid #696969;border-left:1px solid #696969;border-right:1px solid #696969;"></div>
<div class="a" style="left:1px;top:508px;width:1678px;height:1px;background:#fff;"></div>
<span id="t67" class="t s" style="left:6.80px;top:515.39px;font-size:11.00px;color:#000;transform:scaleX(1.0142);">Показывать в журнале:</span>
<svg style="left:142.0px;top:513.0px" width="14" height="14" viewBox="0 0 14 14"><defs><radialGradient id="lg149" cx=".42" cy=".38" r=".7"><stop offset="0" stop-color="#8aa2dc"/><stop offset=".5" stop-color="#3c5cae"/><stop offset="1" stop-color="#1a2f74"/></radialGradient></defs><circle cx="7" cy="7" r="5.3" fill="url(#lg149)" stroke="#141a2a" stroke-width="1.7"/></svg>
<span id="t68" class="t s" style="left:156.50px;top:515.39px;font-size:11.00px;color:#000;transform:scaleX(1.0105);">Команды</span>
<svg style="left:227.1px;top:513.0px" width="14" height="14" viewBox="0 0 14 14"><defs><radialGradient id="lg234" cx=".42" cy=".38" r=".7"><stop offset="0" stop-color="#b4f4ff"/><stop offset=".55" stop-color="#86d6fd"/><stop offset="1" stop-color="#5eaef0"/></radialGradient></defs><circle cx="7" cy="7" r="5.3" fill="url(#lg234)" stroke="#141a2a" stroke-width="1.7"/></svg>
<span id="t69" class="t s" style="left:242.30px;top:515.39px;font-size:11.00px;color:#000;transform:scaleX(0.9192);">Инфо</span>
<svg style="left:293.3px;top:513.0px" width="14" height="14" viewBox="0 0 14 14"><defs><radialGradient id="lg300" cx=".42" cy=".38" r=".7"><stop offset="0" stop-color="#b4f4ff"/><stop offset=".55" stop-color="#86d6fd"/><stop offset="1" stop-color="#5eaef0"/></radialGradient></defs><circle cx="7" cy="7" r="5.3" fill="url(#lg300)" stroke="#141a2a" stroke-width="1.7"/></svg>
<span id="t70" class="t s" style="left:308.10px;top:515.39px;font-size:11.00px;color:#000;transform:scaleX(0.9819);">Предупраждения</span>
<svg style="left:418.3px;top:513.0px" width="14" height="14" viewBox="0 0 14 14"><defs><radialGradient id="lg425" cx=".42" cy=".38" r=".7"><stop offset="0" stop-color="#b4f4ff"/><stop offset=".55" stop-color="#86d6fd"/><stop offset="1" stop-color="#5eaef0"/></radialGradient></defs><circle cx="7" cy="7" r="5.3" fill="url(#lg425)" stroke="#141a2a" stroke-width="1.7"/></svg>
<span id="t71" class="t s" style="left:432.00px;top:515.39px;font-size:11.00px;color:#000;transform:scaleX(0.9952);">Ошибки</span>
<svg style="left:496.0px;top:513.0px" width="14" height="14" viewBox="0 0 14 14"><defs><radialGradient id="lg503" cx=".42" cy=".38" r=".7"><stop offset="0" stop-color="#b4f4ff"/><stop offset=".55" stop-color="#86d6fd"/><stop offset="1" stop-color="#5eaef0"/></radialGradient></defs><circle cx="7" cy="7" r="5.3" fill="url(#lg503)" stroke="#141a2a" stroke-width="1.7"/></svg>
<span id="t72" class="t s" style="left:510.30px;top:515.39px;font-size:11.00px;color:#000;transform:scaleX(0.9946);">Подтверждение</span>
<svg style="left:615.0px;top:513.0px" width="14" height="14" viewBox="0 0 14 14"><defs><radialGradient id="lg622" cx=".42" cy=".38" r=".7"><stop offset="0" stop-color="#b4f4ff"/><stop offset=".55" stop-color="#86d6fd"/><stop offset="1" stop-color="#5eaef0"/></radialGradient></defs><circle cx="7" cy="7" r="5.3" fill="url(#lg622)" stroke="#141a2a" stroke-width="1.7"/></svg>
<span id="t73" class="t s" style="left:629.30px;top:515.39px;font-size:11.00px;color:#000;transform:scaleX(1.0216);">Автопрокрутка</span>
<svg style="left:733.4px;top:514.6px" width="10" height="12" viewBox="0 0 10 12"><path d="M.4 2.4 H9.6 M3.2 2.2 V.9 H6.8 V2.2" stroke="#7a7a7a" stroke-width="1.2" fill="none"/><path d="M1.4 3.8 H8.6 V11.4 H1.4Z" fill="#9a9a9a" stroke="#7a7a7a" stroke-width="1"/><path d="M3.3 5 V10.4 M5 5 V10.4 M6.7 5 V10.4" stroke="#dcdcdc" stroke-width=".8"/></svg>
<span id="t74" class="t s" style="left:747.00px;top:515.39px;font-size:11.00px;color:#000;transform:scaleX(0.9861);">Очистить журнал</span>
<svg style="left:857.6px;top:514.4px" width="14" height="13" viewBox="0 0 14 13"><path d="M.8 3 L3 .7 H7 V9 H.8Z M3.2 .9 V3.2 H1" fill="#fff" stroke="#707070" stroke-width="1.1"/><path d="M6.2 5.6 L8.4 3.4 H12.4 V11.8 H6.2Z M8.6 3.6 V5.8 H6.4" fill="#fff" stroke="#707070" stroke-width="1.1"/></svg>
<span id="t75" class="t s" style="left:873.60px;top:515.39px;font-size:11.00px;color:#000;transform:scaleX(1.0028);">Копировать</span>
<div class="a" style="left:1px;top:533px;width:1661px;height:464px;background:#fff;"></div>
<div class="a" style="left:1px;top:533px;width:102px;height:464px;background:#5f9ea0;"></div>
<div class="row lin" style="left:103px;top:533px;width:1559px;"></div>
<span id="t76" class="t m" style="left:6.00px;top:535.98px;font-size:12.42px;color:#f4f8f8;">18:47:14.189</span>
<span id="t77" class="t m" style="left:108.20px;top:535.98px;font-size:12.42px;color:#000080;">&lt;Slic3r&gt; Filament required: 819.6mm (5.5cm3)</span>
<span id="t78" class="t m" style="left:6.00px;top:551.98px;font-size:12.42px;color:#f4f8f8;">18:47:16.755</span>
<span id="t79" class="t m" style="left:108.20px;top:551.98px;font-size:12.42px;color:#000080;">ok T:19.5 /0.0 B:26.0 /0.0 @:0</span>
<div class="row lin" style="left:103px;top:565px;width:1559px;"></div>
<span id="t80" class="t m" style="left:6.00px;top:567.98px;font-size:12.42px;color:#f4f8f8;">18:47:19.810</span>
<span id="t81" class="t m" style="left:108.20px;top:567.98px;font-size:12.42px;color:#000080;">ok T:19.5 /0.0 B:26.0 /0.0 @:0</span>
<span id="t82" class="t m" style="left:6.00px;top:583.98px;font-size:12.42px;color:#f4f8f8;">18:47:22.875</span>
<span id="t83" class="t m" style="left:108.20px;top:583.98px;font-size:12.42px;color:#000080;">ok T:19.5 /0.0 B:26.1 /0.0 @:0</span>
<div class="row lin" style="left:103px;top:597px;width:1559px;"></div>
<span id="t84" class="t m" style="left:6.00px;top:599.98px;font-size:12.42px;color:#f4f8f8;">18:47:25.931</span>
<span id="t85" class="t m" style="left:108.20px;top:599.98px;font-size:12.42px;color:#000080;">ok T:19.6 /0.0 B:26.0 /0.0 @:0</span>
<span id="t86" class="t m" style="left:6.00px;top:615.98px;font-size:12.42px;color:#f4f8f8;">18:47:28.987</span>
<span id="t87" class="t m" style="left:108.20px;top:615.98px;font-size:12.42px;color:#000080;">ok T:19.7 /0.0 B:26.1 /0.0 @:0</span>
<div class="row lin" style="left:103px;top:629px;width:1559px;"></div>
<span id="t88" class="t m" style="left:6.00px;top:631.98px;font-size:12.42px;color:#f4f8f8;">18:47:32.047</span>
<span id="t89" class="t m" style="left:108.20px;top:631.98px;font-size:12.42px;color:#000080;">ok T:19.6 /0.0 B:26.0 /0.0 @:0</span>
<span id="t90" class="t m" style="left:6.00px;top:647.98px;font-size:12.42px;color:#f4f8f8;">18:47:32.815</span>
<span id="t91" class="t m" style="left:108.20px;top:647.98px;font-size:12.42px;color:#8b0000;">Error:checksum mismatch, Last Line:18</span>
<div class="row lin" style="left:103px;top:661px;width:1559px;"></div>
<span id="t92" class="t m" style="left:6.00px;top:663.98px;font-size:12.42px;color:#f4f8f8;">18:47:32.815</span>
<span id="t93" class="t m" style="left:108.20px;top:663.98px;font-size:12.42px;color:#ff4500;">Resend:19</span>
<span id="t94" class="t m" style="left:6.00px;top:679.98px;font-size:12.42px;color:#f4f8f8;">18:47:32.826</span>
<span id="t95" class="t m" style="left:108.20px;top:679.98px;font-size:12.42px;color:#000080;">ok</span>
<div class="row lin" style="left:103px;top:693px;width:1559px;"></div>
<span id="t96" class="t m" style="left:6.00px;top:695.98px;font-size:12.42px;color:#f4f8f8;">18:47:32.831</span>
<span id="t97" class="t m" style="left:108.20px;top:695.98px;font-size:12.42px;color:#8b0000;">Error:checksum mismatch, Last Line:18</span>
<span id="t98" class="t m" style="left:6.00px;top:711.98px;font-size:12.42px;color:#f4f8f8;">18:47:32.831</span>
<span id="t99" class="t m" style="left:108.20px;top:711.98px;font-size:12.42px;color:#ff4500;">Resend:19</span>
<div class="row lin" style="left:103px;top:725px;width:1559px;"></div>
<span id="t100" class="t m" style="left:6.00px;top:727.98px;font-size:12.42px;color:#f4f8f8;">18:47:32.839</span>
<span id="t101" class="t m" style="left:108.20px;top:727.98px;font-size:12.42px;color:#000080;">ok</span>
<span id="t102" class="t m" style="left:6.00px;top:743.98px;font-size:12.42px;color:#f4f8f8;">18:47:32.839</span>
<span id="t103" class="t m" style="left:108.20px;top:743.98px;font-size:12.42px;color:#8b0000;">Error:Line Number is not Last Line Number+1, Last Line:18</span>
<div class="row lin" style="left:103px;top:757px;width:1559px;"></div>
<span id="t104" class="t m" style="left:6.00px;top:759.98px;font-size:12.42px;color:#f4f8f8;">18:47:32.839</span>
<span id="t105" class="t m" style="left:108.20px;top:759.98px;font-size:12.42px;color:#ff4500;">Resend:19</span>
<span id="t106" class="t m" style="left:6.00px;top:775.98px;font-size:12.42px;color:#f4f8f8;">18:47:32.839</span>
<span id="t107" class="t m" style="left:108.20px;top:775.98px;font-size:12.42px;color:#000080;">ok</span>
<div class="row lin" style="left:103px;top:789px;width:1559px;"></div>
<span id="t108" class="t m" style="left:6.00px;top:791.98px;font-size:12.42px;color:#f4f8f8;">18:47:32.843</span>
<span id="t109" class="t m" style="left:108.20px;top:791.98px;font-size:12.42px;color:#8b0000;">Error:Line Number is not Last Line Number+1, Last Line:18</span>
<span id="t110" class="t m" style="left:6.00px;top:807.98px;font-size:12.42px;color:#f4f8f8;">18:47:32.843</span>
<span id="t111" class="t m" style="left:108.20px;top:807.98px;font-size:12.42px;color:#ff4500;">Resend:19</span>
<div class="row lin" style="left:103px;top:821px;width:1559px;"></div>
<span id="t112" class="t m" style="left:6.00px;top:823.98px;font-size:12.42px;color:#f4f8f8;">18:47:32.850</span>
<span id="t113" class="t m" style="left:108.20px;top:823.98px;font-size:12.42px;color:#000080;">ok</span>
<span id="t114" class="t m" style="left:6.00px;top:839.98px;font-size:12.42px;color:#f4f8f8;">18:47:32.852</span>
<span id="t115" class="t m" style="left:108.20px;top:839.98px;font-size:12.42px;color:#8b0000;">Error:Line Number is not Last Line Number+1, Last Line:18</span>
<div class="row lin" style="left:103px;top:853px;width:1559px;"></div>
<span id="t116" class="t m" style="left:6.00px;top:855.98px;font-size:12.42px;color:#f4f8f8;">18:47:32.852</span>
<span id="t117" class="t m" style="left:108.20px;top:855.98px;font-size:12.42px;color:#ff4500;">Resend:19</span>
<div class="row" style="left:103px;top:869px;width:1559px;background:#20b2aa;"></div>
<span id="t118" class="t m" style="left:6.00px;top:871.98px;font-size:12.42px;color:#f4f8f8;">18:47:32.858</span>
<span id="t119" class="t m" style="left:108.20px;top:871.98px;font-size:12.42px;color:#e8f6f4;">ok</span>
<div class="row lin" style="left:103px;top:885px;width:1559px;"></div>
<span id="t120" class="t m" style="left:6.00px;top:887.98px;font-size:12.42px;color:#f4f8f8;">18:47:32.858</span>
<span id="t121" class="t m" style="left:108.20px;top:887.98px;font-size:12.42px;color:#8b0000;">Error:Line Number is not Last Line Number+1, Last Line:18</span>
<span id="t122" class="t m" style="left:6.00px;top:903.98px;font-size:12.42px;color:#f4f8f8;">18:47:32.858</span>
<span id="t123" class="t m" style="left:108.20px;top:903.98px;font-size:12.42px;color:#ff4500;">Resend:19</span>
<div class="row lin" style="left:103px;top:917px;width:1559px;"></div>
<span id="t124" class="t m" style="left:6.00px;top:919.98px;font-size:12.42px;color:#f4f8f8;">18:47:32.858</span>
<span id="t125" class="t m" style="left:108.20px;top:919.98px;font-size:12.42px;color:#000080;">ok</span>
<span id="t126" class="t m" style="left:6.00px;top:935.98px;font-size:12.42px;color:#f4f8f8;">18:47:32.860</span>
<span id="t127" class="t m" style="left:108.20px;top:935.98px;font-size:12.42px;color:#8b0000;">Error:Line Number is not Last Line Number+1, Last Line:18</span>
<div class="row lin" style="left:103px;top:949px;width:1559px;"></div>
<span id="t128" class="t m" style="left:6.00px;top:951.98px;font-size:12.42px;color:#f4f8f8;">18:47:32.860</span>
<span id="t129" class="t m" style="left:108.20px;top:951.98px;font-size:12.42px;color:#ff4500;">Resend:19</span>
<span id="t130" class="t m" style="left:6.00px;top:967.98px;font-size:12.42px;color:#f4f8f8;">18:47:32.866</span>
<span id="t131" class="t m" style="left:108.20px;top:967.98px;font-size:12.42px;color:#000080;">ok</span>
<div class="row lin" style="left:103px;top:981px;width:1559px;"></div>
<span id="t132" class="t m" style="left:6.00px;top:983.98px;font-size:12.42px;color:#f4f8f8;">18:47:32.866</span>
<span id="t133" class="t m" style="left:108.20px;top:983.98px;font-size:12.42px;color:#8b0000;">Error:Line Number is not Last Line Number+1, Last Line:18</span>
<div class="a" style="left:1662px;top:533px;width:17px;height:464px;background:#f0f0f0;"></div>
<div class="a" style="left:1662.5px;top:647px;width:16px;height:55px;box-sizing:border-box;border:1px solid #8d8d8d;border-radius:3px;background:linear-gradient(90deg,#f3f6fa,#e3e8f0 45%,#c9d2de 50%,#d5dce6);"></div>
<svg style="left:1666.5px;top:670px" width="8" height="9" viewBox="0 0 8 9"><path d="M.5 1.5 H7.5 M.5 4.5 H7.5 M.5 7.5 H7.5" stroke="#5a6676" stroke-width="1.2"/></svg>
<div class="a" style="left:1663.5px;top:534px;width:15px;height:15px;box-sizing:border-box;border:1px solid #dadada;border-radius:2px;background:linear-gradient(#f4f4f4,#ececec);"></div>
<svg style="left:1667.6px;top:539.6px" width="8" height="5" viewBox="0 0 8 5"><path d="M.4 4.6 H7.6 L4 .6Z" fill="#3a3a3a"/></svg>
<svg style="left:1666.5px;top:986.5px" width="8" height="5" viewBox="0 0 8 5"><path d="M.4 .4 H7.6 L4 4.4Z" fill="#444"/></svg>
<!-- status bar -->
<div class="a" style="left:0;top:997px;width:1680px;height:1px;background:#6e6e6e;"></div>
<div class="a" style="left:0;top:998px;width:1680px;height:22px;background:#f1f0f0;"></div>
<span id="t134" class="t s" style="left:3.50px;top:1004.14px;font-size:12.00px;color:#000;transform:scaleX(1.0340);">Отключено</span>
<span id="t135" class="t s" style="left:74.30px;top:1004.14px;font-size:12.00px;color:#000;transform:scaleX(0.9557);">Экструдер: 19.60/35°C Панель: 26.00/35°C</span>
<span id="t136" class="t s" style="left:318.30px;top:1004.14px;font-size:12.00px;color:#000;transform:scaleX(1.0159);">Готов</span>
<span id="t137" class="t s" style="left:572.30px;top:1004.14px;font-size:12.00px;color:#000;transform:scaleX(0.8768);">1833 FPS</span>
<div class="a" style="left:355px;top:1000px;width:214px;height:17px;box-sizing:border-box;border:1px solid #b2b2b2;border-radius:3px;background:linear-gradient(#f3f3f3,#e3e3e3 45%,#d0d0d0 50%,#d9d9d9);"></div>
<svg style="left:14.5px;top:1015.2px" width="26" height="5" viewBox="0 0 26 5"><path d="M.6 5 Q13 -3.6 25.4 5" fill="#dfe6ee" stroke="#8795a8" stroke-width="1"/></svg>
</div>
</body></html>
